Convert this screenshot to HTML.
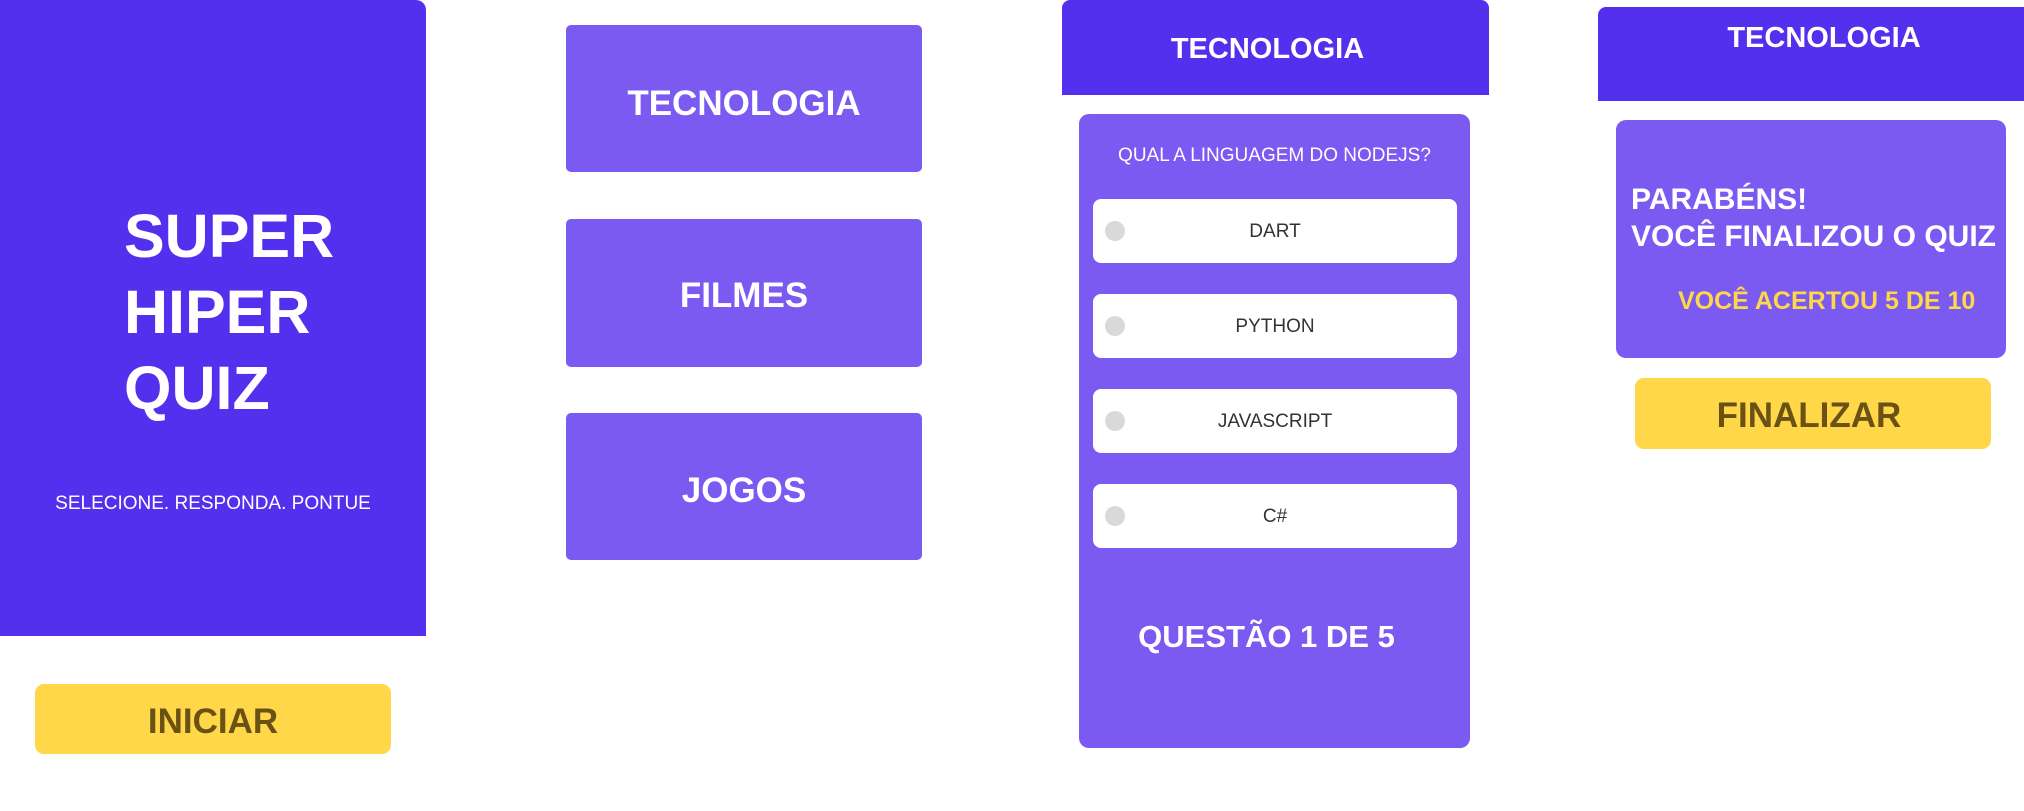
<!DOCTYPE html>
<html><head><meta charset="utf-8"><style>
*{margin:0;padding:0;box-sizing:border-box}
body{width:2024px;height:811px;background:#fff;position:relative;overflow:hidden;font-family:"Liberation Sans",sans-serif}
.a{position:absolute}
.dark{background:#532FEE}
.light{background:#7A5AF1}
.c{display:flex;align-items:center;justify-content:center;color:#fff;font-weight:bold}
.y{background:#FFD748;color:#6A5214;border-radius:9px;font-size:35px}
.opt{background:#fff;border-radius:8px;left:1093px;width:364px;height:64px;color:#333;font-size:19px;display:flex;align-items:center;justify-content:center;padding-top:2px}
.opt i{position:absolute;left:12px;top:22px;width:20px;height:20px;border-radius:50%;background:#d9d9d9}
</style></head><body>
<div class="a dark" style="left:0;top:0;width:426px;height:636px;border-radius:0 10px 0 0"></div>
<div class="a" style="left:124px;top:198px;color:#fff;font-weight:bold;font-size:61px;line-height:76px">SUPER<br>HIPER<br>QUIZ</div>
<div class="a" style="left:52px;top:493px;width:322px;color:#fff;font-size:19px;text-align:center;white-space:nowrap">SELECIONE. RESPONDA. PONTUE</div>
<div class="a c y" style="left:35px;top:684px;width:356px;height:70px;padding-top:5px">INICIAR</div>

<div class="a c light" style="left:566px;top:25px;width:356px;height:147px;border-radius:5px;font-size:35px;padding-top:10px">TECNOLOGIA</div>
<div class="a c light" style="left:566px;top:219px;width:356px;height:148px;border-radius:5px;font-size:35px;padding-top:6px">FILMES</div>
<div class="a c light" style="left:566px;top:413px;width:356px;height:147px;border-radius:5px;font-size:35px;padding-top:8px">JOGOS</div>

<div class="a c dark" style="left:1062px;top:0;width:427px;height:95px;border-radius:8px 8px 0 0;font-size:29px;padding-top:3px;padding-right:16px">TECNOLOGIA</div>
<div class="a light" style="left:1079px;top:114px;width:391px;height:634px;border-radius:10px"></div>
<div class="a" style="left:1079px;top:145px;width:391px;text-align:center;color:#fff;font-size:19px">QUAL A LINGUAGEM DO NODEJS?</div>
<div class="a opt" style="top:199px"><i></i>DART</div>
<div class="a opt" style="top:294px"><i></i>PYTHON</div>
<div class="a opt" style="top:389px"><i></i>JAVASCRIPT</div>
<div class="a opt" style="top:484px"><i></i>C#</div>
<div class="a" style="left:1071px;top:619px;width:391px;text-align:center;color:#fff;font-weight:bold;font-size:31px">QUESTÃO 1 DE 5</div>

<div class="a dark" style="left:1598px;top:7px;width:426px;height:94px;border-radius:8px 0 0 0"></div>
<div class="a" style="left:1598px;top:22px;width:452px;text-align:center;color:#fff;font-weight:bold;font-size:29px">TECNOLOGIA</div>
<div class="a light" style="left:1616px;top:120px;width:390px;height:238px;border-radius:10px"></div>
<div class="a" style="left:1631px;top:181px;color:#fff;font-weight:bold;font-size:30px;line-height:37px;white-space:nowrap">PARABÉNS!<br>VOCÊ FINALIZOU O QUIZ</div>
<div class="a" style="left:1678px;top:287px;color:#FFD748;font-weight:bold;font-size:25px;white-space:nowrap">VOCÊ ACERTOU 5 DE 10</div>
<div class="a c y" style="left:1635px;top:378px;width:356px;height:71px;padding-top:5px;padding-right:8px">FINALIZAR</div>
</body></html>
